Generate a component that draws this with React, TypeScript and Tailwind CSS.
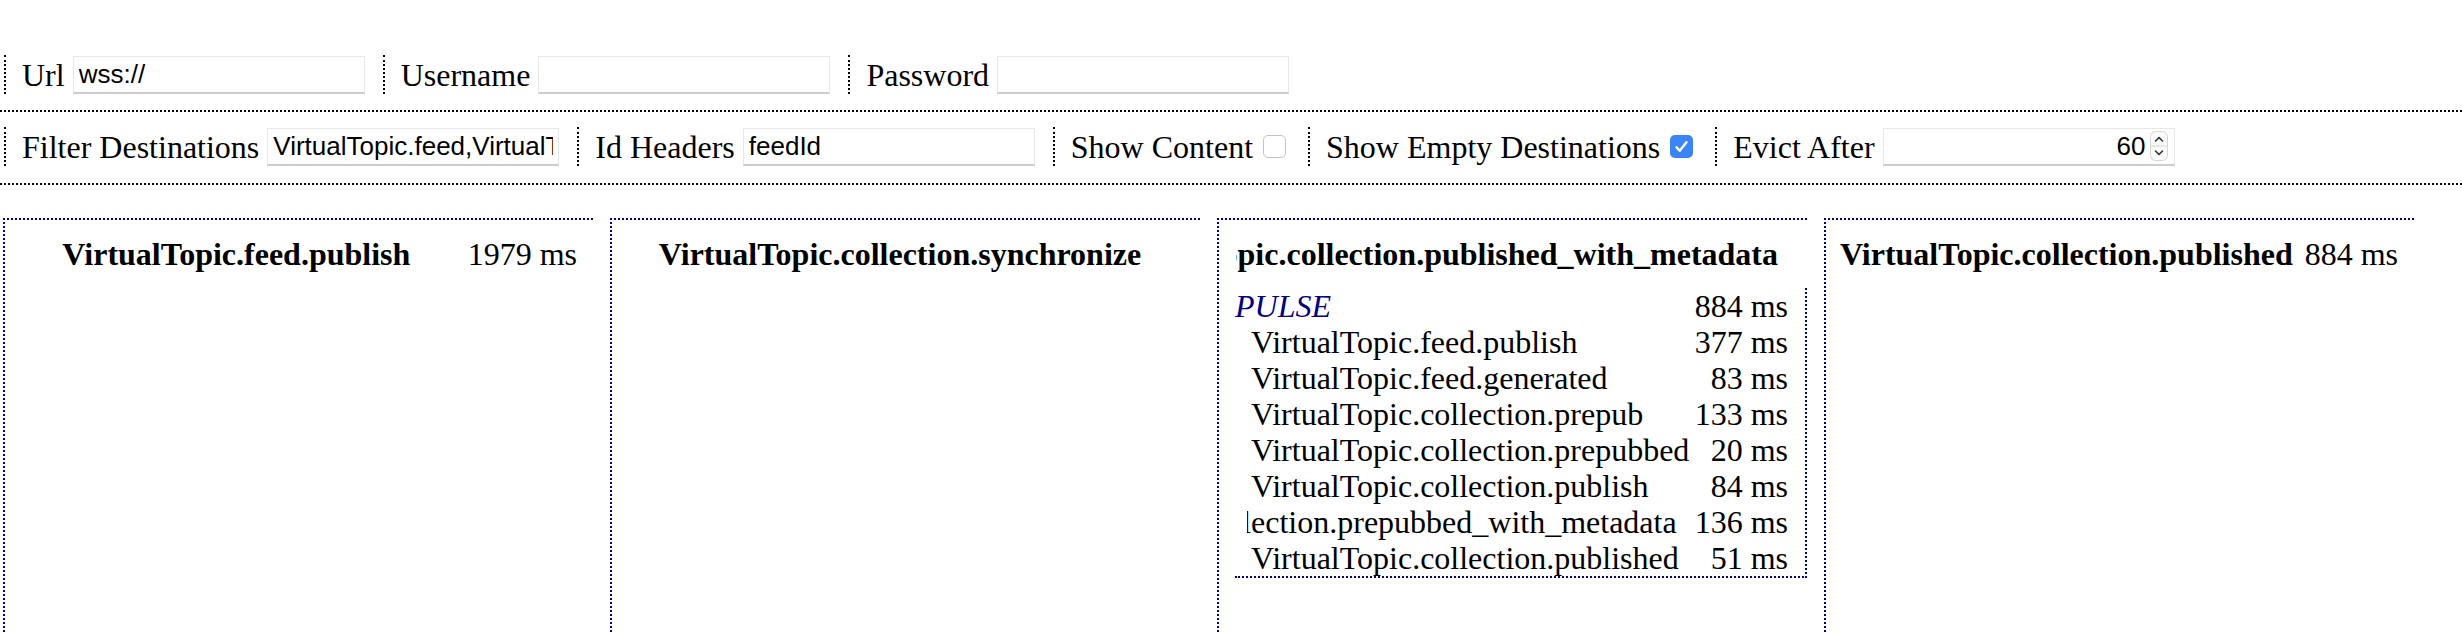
import React from 'react';

const destinations = [
    {name: "VirtualTopic.feed.publish", time: "1979 ms", pulse: null},
    {name: "VirtualTopic.collection.synchronize", time: "", pulse: null},
    {
        name: "VirtualTopic.collection.published_with_metadata",
        time: "",
        pulse: {
            time: "884 ms",
            hops: [
                {name: "VirtualTopic.feed.publish", time: "377 ms"},
                {name: "VirtualTopic.feed.generated", time: "83 ms"},
                {name: "VirtualTopic.collection.prepub", time: "133 ms"},
                {name: "VirtualTopic.collection.prepubbed", time: "20 ms"},
                {name: "VirtualTopic.collection.publish", time: "84 ms"},
                {name: "VirtualTopic.collection.prepubbed_with_metadata", time: "136 ms"},
                {name: "VirtualTopic.collection.published", time: "51 ms"},
            ]
        }
    },
    {name: "VirtualTopic.collection.published", time: "884 ms", pulse: null},
];

const inputClass = "h-[38px] w-[292px] bg-white border border-[#e8e8e8] border-b-2 border-b-[#cdcdcd] px-[5px] font-['Liberation_Sans',Arial,sans-serif] text-[26px] text-black outline-none";

const Field = ({label, children}) => {
    return (
        <div className="flex items-center h-[39px] border-l-2 border-dotted border-black pl-[16px] whitespace-nowrap">
            <span>{label}</span>
            {children}
        </div>
    )
}

const Checkbox = ({checked}) => {
    if (checked) {
        return (
            <span className="ml-[10px] mr-[4px] flex items-center justify-center w-[23px] h-[23px] rounded-[5px] bg-[#3a85f6]">
                <svg width="17" height="17" viewBox="0 0 24 24" fill="none" stroke="white" strokeWidth="3.5"
                     strokeLinecap="round" strokeLinejoin="round">
                    <path d="M5 13l4.5 5L19 6"/>
                </svg>
            </span>
        )
    }
    return <span className="ml-[10px] mr-[4px] block w-[23px] h-[23px] rounded-[5px] border border-[#c4c4c4] bg-white"/>
}

const DestinationCard = ({destination}) => {
    const hasTime = destination.time !== "";

    return (
        <div className="w-[590px] h-[430px] shrink-0 border-l-2 border-t-2 border-dotted border-[#000080] pt-4">
            {/* spacers give up their width before the name gets clipped */}
            <div className="flex pr-4 leading-[37px]">
                <div className={hasTime ? "w-4 shrink-[1000] min-w-[14px]" : "w-[17px] shrink-0"}/>
                <div dir="rtl" className="flex-auto min-w-0 overflow-hidden whitespace-nowrap text-center font-bold">
                    {destination.name}
                </div>
                <div className={hasTime ? "w-4 shrink-[1000] min-w-[8px]" : "w-[13px] shrink-0"}/>
                {hasTime && <div className="whitespace-nowrap">{destination.time}</div>}
            </div>

            {destination.pulse && (
                <div className="ml-4 mt-[15px] pr-[17px] leading-[36px] border-r-2 border-b-2 border-dotted border-[#000080]">
                    <div className="flex justify-between">
                        <div className="italic text-[#000080]">PULSE</div>
                        <div className="whitespace-nowrap">{destination.pulse.time}</div>
                    </div>
                    {destination.pulse.hops.map((hop, idx) => (
                        <div key={idx} className="flex">
                            <div dir="rtl" className="flex-1 min-w-0 ml-[12px] pl-[4px] overflow-hidden whitespace-nowrap text-left">
                                {hop.name}
                            </div>
                            <div className="pl-[18px] whitespace-nowrap">{hop.time}</div>
                        </div>
                    ))}
                </div>
            )}
        </div>
    )
}

export default function App() {
    return (
        <div className="min-h-screen bg-white text-black font-['Liberation_Serif','Times_New_Roman',serif] text-[32px] pt-[55px] overflow-hidden">
            <div className="flex items-center gap-[18px] pl-[4px] pb-[16px] border-b-2 border-dotted border-black">
                <Field label="Url">
                    <input className={inputClass + " ml-[8px]"} defaultValue="wss://"/>
                </Field>
                <Field label="Username">
                    <input className={inputClass + " ml-[8px]"} defaultValue=""/>
                </Field>
                <Field label="Password">
                    <input type="password" className={inputClass + " ml-[8px]"} defaultValue=""/>
                </Field>
            </div>

            <div className="flex items-center gap-[18px] pl-[4px] pt-[15px] pb-[17px] border-b-2 border-dotted border-black">
                <Field label="Filter Destinations">
                    <input className={inputClass + " ml-[8px]"}
                           defaultValue="VirtualTopic.feed,VirtualTopic.collection"/>
                </Field>
                <Field label="Id Headers">
                    <input className={inputClass + " ml-[8px]"} defaultValue="feedId"/>
                </Field>
                <Field label="Show Content">
                    <Checkbox checked={false}/>
                </Field>
                <Field label="Show Empty Destinations">
                    <Checkbox checked={true}/>
                </Field>
                <Field label="Evict After">
                    <div className="ml-[8px] flex items-center h-[38px] w-[292px] bg-white border border-[#e8e8e8] border-b-2 border-b-[#cdcdcd] pr-[6px]">
                        <input className="flex-1 min-w-0 text-right bg-transparent pr-[4px] font-['Liberation_Sans',Arial,sans-serif] text-[26px] text-black outline-none"
                               defaultValue="60"/>
                        <svg width="18" height="30" viewBox="0 0 18 30" fill="none">
                            <rect x="0.5" y="0.5" width="17" height="29" rx="5" fill="#fafafa" stroke="#d6d6d6"/>
                            <line x1="1" y1="15" x2="17" y2="15" stroke="#d6d6d6"/>
                            <path d="M5.5 10l3.5-3.5 3.5 3.5" stroke="#333" strokeWidth="1.6" strokeLinecap="round"
                                  strokeLinejoin="round"/>
                            <path d="M5.5 20l3.5 3.5 3.5-3.5" stroke="#333" strokeWidth="1.6" strokeLinecap="round"
                                  strokeLinejoin="round"/>
                        </svg>
                    </div>
                </Field>
            </div>

            <div className="flex gap-[17px] pl-[3px] mt-[33px]">
                {destinations.map((destination, idx) => (
                    <DestinationCard key={idx} destination={destination}/>
                ))}
            </div>
        </div>
    );
}
